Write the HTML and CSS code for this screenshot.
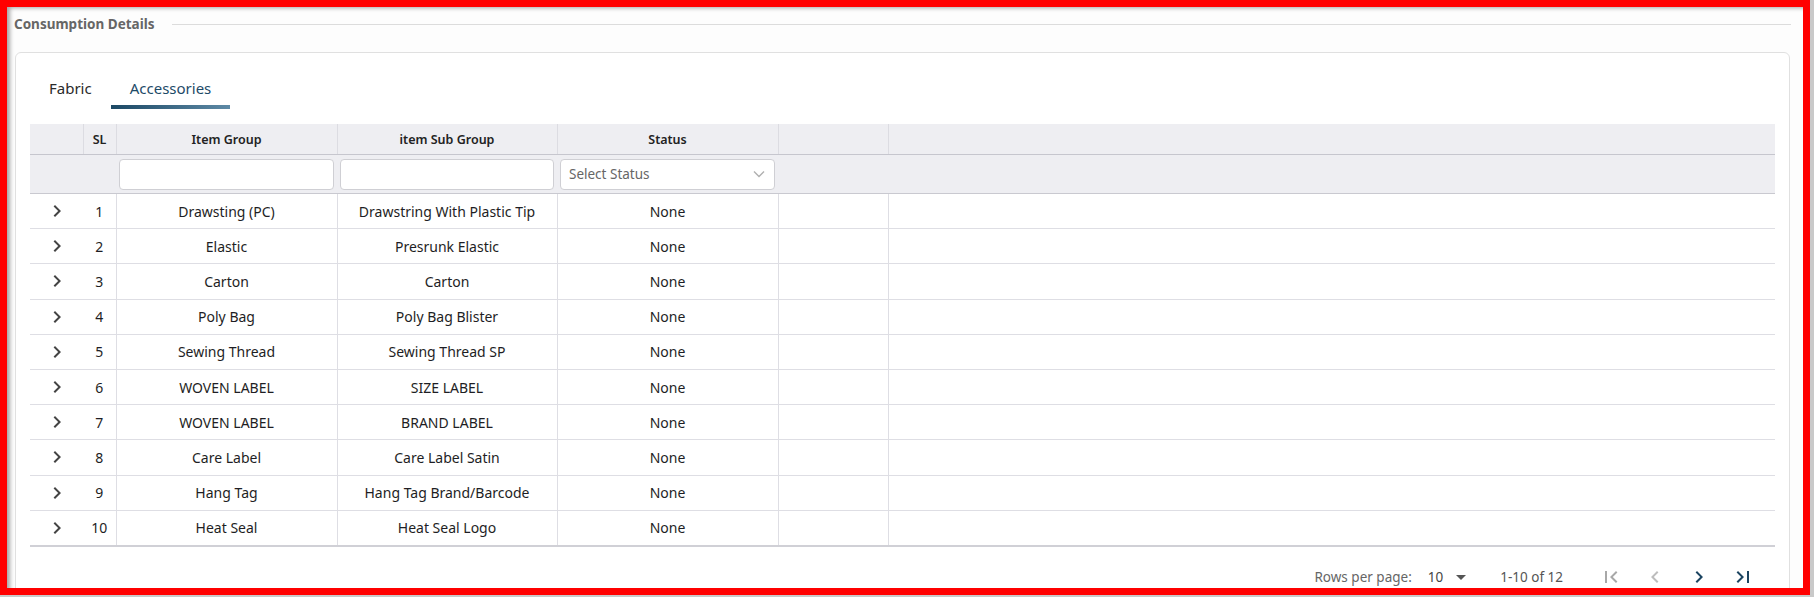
FILE: index.html
```html
<!DOCTYPE html>
<html>
<head>
<meta charset="utf-8">
<link rel="stylesheet" href="styles.css">
</head>
<body>
<div class="frame">
  <div class="page">
    <div class="legend"><span>Consumption Details</span></div>
    <div class="card">
      <div class="tabs">
        <div class="tab">Fabric</div>
        <div class="tab active">Accessories</div>
      </div>
      <table class="grid">
        <colgroup>
          <col class="c-exp"><col class="c-sl"><col class="c-grp"><col class="c-sub"><col class="c-st"><col class="c-blank"><col>
        </colgroup>
        <thead>
          <tr class="head">
            <th class="bl"></th><th>SL</th><th>Item Group</th><th>item Sub Group</th><th>Status</th><th></th><th class="last"></th>
          </tr>
          <tr class="filter">
            <td></td><td></td>
            <td><div class="inp"></div></td>
            <td><div class="inp"></div></td>
            <td><div class="inp sel"><span>Select Status</span><svg width="14" height="14" viewBox="0 0 14 14"><path d="M2 4.5 7 9.5 12 4.5" fill="none" stroke="#b0b0b0" stroke-width="1.4"/></svg></div></td>
            <td></td><td></td>
          </tr>
        </thead>
        <tbody>
          <tr><td class="exp"><svg width="24" height="24" viewBox="0 0 24 24"><path d="M10 6L8.59 7.41 13.17 12l-4.58 4.59L10 18l6-6z" fill="#444"/></svg></td><td>1</td><td>Drawsting (PC)</td><td>Drawstring With Plastic Tip</td><td>None</td><td></td><td class="last"></td></tr>
          <tr><td class="exp"><svg width="24" height="24" viewBox="0 0 24 24"><path d="M10 6L8.59 7.41 13.17 12l-4.58 4.59L10 18l6-6z" fill="#444"/></svg></td><td>2</td><td>Elastic</td><td>Presrunk Elastic</td><td>None</td><td></td><td class="last"></td></tr>
          <tr><td class="exp"><svg width="24" height="24" viewBox="0 0 24 24"><path d="M10 6L8.59 7.41 13.17 12l-4.58 4.59L10 18l6-6z" fill="#444"/></svg></td><td>3</td><td>Carton</td><td>Carton</td><td>None</td><td></td><td class="last"></td></tr>
          <tr><td class="exp"><svg width="24" height="24" viewBox="0 0 24 24"><path d="M10 6L8.59 7.41 13.17 12l-4.58 4.59L10 18l6-6z" fill="#444"/></svg></td><td>4</td><td>Poly Bag</td><td>Poly Bag Blister</td><td>None</td><td></td><td class="last"></td></tr>
          <tr><td class="exp"><svg width="24" height="24" viewBox="0 0 24 24"><path d="M10 6L8.59 7.41 13.17 12l-4.58 4.59L10 18l6-6z" fill="#444"/></svg></td><td>5</td><td>Sewing Thread</td><td>Sewing Thread SP</td><td>None</td><td></td><td class="last"></td></tr>
          <tr><td class="exp"><svg width="24" height="24" viewBox="0 0 24 24"><path d="M10 6L8.59 7.41 13.17 12l-4.58 4.59L10 18l6-6z" fill="#444"/></svg></td><td>6</td><td>WOVEN LABEL</td><td>SIZE LABEL</td><td>None</td><td></td><td class="last"></td></tr>
          <tr><td class="exp"><svg width="24" height="24" viewBox="0 0 24 24"><path d="M10 6L8.59 7.41 13.17 12l-4.58 4.59L10 18l6-6z" fill="#444"/></svg></td><td>7</td><td>WOVEN LABEL</td><td>BRAND LABEL</td><td>None</td><td></td><td class="last"></td></tr>
          <tr><td class="exp"><svg width="24" height="24" viewBox="0 0 24 24"><path d="M10 6L8.59 7.41 13.17 12l-4.58 4.59L10 18l6-6z" fill="#444"/></svg></td><td>8</td><td>Care Label</td><td>Care Label Satin</td><td>None</td><td></td><td class="last"></td></tr>
          <tr><td class="exp"><svg width="24" height="24" viewBox="0 0 24 24"><path d="M10 6L8.59 7.41 13.17 12l-4.58 4.59L10 18l6-6z" fill="#444"/></svg></td><td>9</td><td>Hang Tag</td><td>Hang Tag Brand/Barcode</td><td>None</td><td></td><td class="last"></td></tr>
          <tr class="final"><td class="exp"><svg width="24" height="24" viewBox="0 0 24 24"><path d="M10 6L8.59 7.41 13.17 12l-4.58 4.59L10 18l6-6z" fill="#444"/></svg></td><td>10</td><td>Heat Seal</td><td>Heat Seal Logo</td><td>None</td><td></td><td class="last"></td></tr>
        </tbody>
      </table>
      <div class="pager">
        <span class="rpp">Rows per page:</span>
        <span class="rpp-val">10</span>
        <svg class="dd" width="24" height="24" viewBox="0 0 24 24"><path d="M7 10l5 5 5-5z" fill="#555"/></svg>
        <span class="range">1-10 of 12</span>
        <div class="nav">
          <svg width="24" height="24" viewBox="0 0 24 24"><path d="M18.41 16.59L13.82 12l4.59-4.59L17 6l-6 6 6 6zM6 6h2v12H6z" fill="#a8a8a8"/></svg>
          <svg width="24" height="24" viewBox="0 0 24 24"><path d="M15.41 7.41L14 6l-6 6 6 6 1.41-1.41L10.83 12z" fill="#bdbdbd"/></svg>
          <svg width="24" height="24" viewBox="0 0 24 24"><path d="M10 6L8.59 7.41 13.17 12l-4.58 4.59L10 18l6-6z" fill="#1c4461"/></svg>
          <svg width="24" height="24" viewBox="0 0 24 24"><path d="M5.59 7.41L10.18 12l-4.59 4.59L7 18l6-6-6-6zM16 6h2v12h-2z" fill="#1c4461"/></svg>
        </div>
      </div>
    </div>
  </div>
</div>
</body>
</html>
```

FILE: styles.css
```css
html, body {
  margin: 0;
  padding: 0;
}
body {
  background: #c9c9c9;
  font-family: "Noto Sans", "DejaVu Sans", sans-serif;
  color: #222;
}
.frame {
  width: 1810px;
  height: 595px;
  box-sizing: border-box;
  border: 7px solid #ff0000;
  overflow: hidden;
}
.page {
  height: 100%;
  background: #fdfdfd;
  box-shadow: inset 5px 3px 4px -2px rgba(0, 0, 0, 0.35);
  padding: 9px 12px 0 7px;
  box-sizing: border-box;
}
.legend {
  display: flex;
  align-items: center;
  gap: 18px;
  height: 16px;
  font-size: 13.5px;
  font-weight: 700;
  color: #666;
}
.legend::after {
  content: "";
  flex: 1;
  border-top: 1px solid #dcdcdc;
  margin-top: 1px;
}
.card {
  margin: 20px 1px 0 1px;
  border: 1px solid #e0e0e0;
  border-radius: 6px;
  background: #fff;
  padding: 0 14px;
  height: 600px;
}
.tabs {
  display: flex;
  margin-top: 17px;
}
.tab {
  padding: 8px 19px 7px;
  font-size: 15px;
  line-height: 20px;
  color: #2a2a2a;
  border-bottom: 4px solid transparent;
}
.tab.active {
  color: #1d4a68;
  border-image: linear-gradient(90deg, #1b4864, #5e8aa6) 1;
}
.grid {
  margin-top: 15px;
  width: 1745px;
  border-collapse: collapse;
  table-layout: fixed;
  font-size: 14px;
}
.c-exp { width: 53px; }
.c-sl { width: 33px; }
.c-grp { width: 221px; }
.c-sub { width: 220px; }
.c-st { width: 221px; }
.c-blank { width: 110px; }
.head th {
  height: 30px;
  padding: 0;
  background: #eeeef2;
  font-weight: 600;
  font-size: 12.5px;
  color: #222;
  border-right: 1px solid #dcdce2;
  border-bottom: 1px solid #c6c6ce;
  text-align: center;
}
.head th.last { border-right: none; }
.filter td {
  height: 38px;
  padding: 0 3px;
  background: #eeeef2;
  border-bottom: 1px solid #c9c9d0;
}
.inp {
  height: 29px;
  border: 1px solid #cfcfd4;
  border-radius: 4px;
  background: #fff;
  box-sizing: content-box;
}
.inp.sel {
  display: flex;
  align-items: center;
  justify-content: space-between;
  padding: 0 8px;
  color: #666;
  font-size: 13.5px;
}
tbody td {
  height: 34.2px;
  padding: 0;
  text-align: center;
  color: #1e1e24;
  border-bottom: 1px solid #dedee4;
  border-right: 1px solid #dedee4;
}
tbody td.exp {
  border-right: none;
}
tbody td.exp svg {
  display: block;
  margin: 0 auto;
}
tbody td.last { border-right: none; }
tbody tr.final td {
  border-bottom: 2px solid #d0d0d6;
}
.pager {
  display: flex;
  align-items: center;
  justify-content: flex-end;
  margin-top: 18px;
  height: 24px;
  font-size: 13.5px;
  color: #555;
  padding-right: 20px;
}
.rpp { margin-right: 16px; color: #666; }
.rpp-val { color: #444; }
.dd { margin-left: 6px; }
.range { margin-left: 27px; color: #555; }
.nav {
  display: flex;
  gap: 20px;
  margin-left: 36px;
}
```
